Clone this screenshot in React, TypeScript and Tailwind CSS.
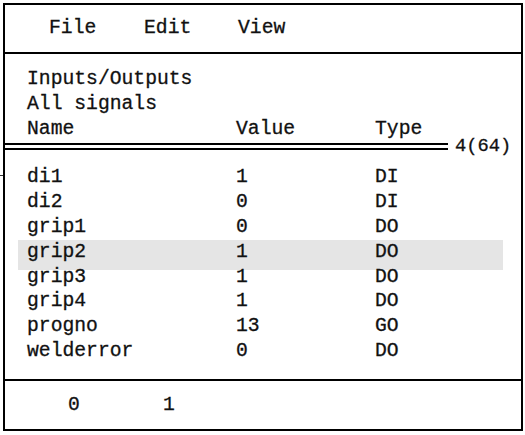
const rows = [
  { name: 'di1', value: '1', type: 'DI' },
  { name: 'di2', value: '0', type: 'DI' },
  { name: 'grip1', value: '0', type: 'DO' },
  { name: 'grip2', value: '1', type: 'DO', selected: true },
  { name: 'grip3', value: '1', type: 'DO' },
  { name: 'grip4', value: '1', type: 'DO' },
  { name: 'progno', value: '13', type: 'GO' },
  { name: 'welderror', value: '0', type: 'DO' },
]

const mono = "font-['Liberation_Mono','Courier_New',monospace]"

export default function App() {
  return (
    <div className={`relative w-[525px] h-[435px] bg-white pt-[3px] pl-[3px] text-[#111] text-[19.7px] leading-[24.8px] ${mono} [-webkit-text-stroke:0.3px_#111]`}>
      {/* stray tick left of the frame */}
      <div className="absolute left-0 top-[175px] w-[3px] h-px bg-[#333]" />

      <div className="w-[520px] h-[428px] border-2 border-black flex flex-col">
        {/* menu bar */}
        <div className="h-[47px] flex items-center pl-[44px]">
          <span className="w-[95px]">File</span>
          <span className="w-[94px]">Edit</span>
          <span>View</span>
        </div>

        {/* signal list */}
        <div className="flex-1 border-y-2 border-black pt-[13px]">
          <div className="pl-[22px]">
            <div>Inputs/Outputs</div>
            <div>All signals</div>
            <div className="grid grid-cols-[209px_139px_1fr]">
              <span>Name</span>
              <span>Value</span>
              <span>Type</span>
            </div>
          </div>

          <div className="flex items-center h-[7px] mt-[2px]">
            <div className="w-[443px] h-[7px] border-y-2 border-black" />
            <span className="ml-[7px] text-[18.8px] leading-[7px]">4(64)</span>
          </div>

          <div className="mt-[15px]">
            {rows.map((row) => (
              <div
                key={row.name}
                className={
                  row.selected
                    ? 'ml-[13px] w-[485px] pl-[9px] pb-[5px] -mb-[5px] bg-[#e5e5e5] grid grid-cols-[209px_139px_1fr]'
                    : 'ml-[13px] w-[485px] pl-[9px] grid grid-cols-[209px_139px_1fr]'
                }
              >
                <span>{row.name}</span>
                <span>{row.value}</span>
                <span>{row.type}</span>
              </div>
            ))}
          </div>
        </div>

        {/* footer */}
        <div className="h-[48px] flex items-center pl-[63px]">
          <span className="w-[95px]">0</span>
          <span>1</span>
        </div>
      </div>
    </div>
  )
}
